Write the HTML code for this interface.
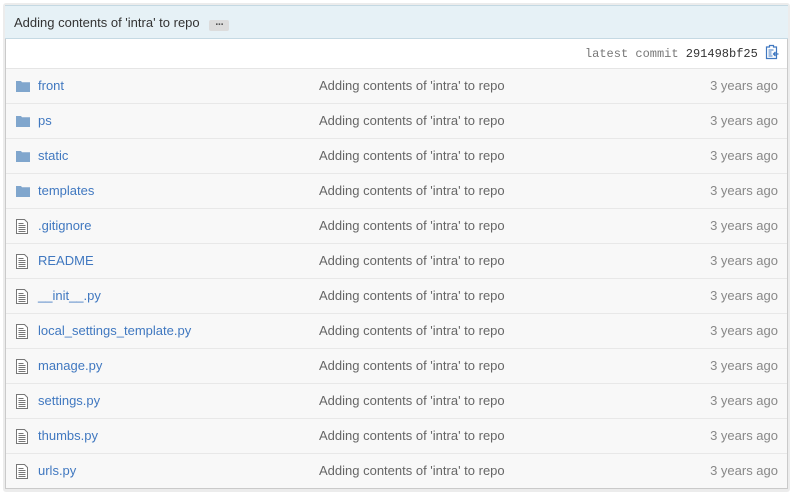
<!DOCTYPE html>
<html><head><meta charset="utf-8"><style>
body{margin:0;width:794px;height:495px;background:#fff;font-family:"Liberation Sans",sans-serif;overflow:hidden}
.outer{position:absolute;left:3px;top:3px;width:787px;height:489px;background:#ececec;border-radius:3px}
.box{position:absolute;left:5px;top:5px;width:783px;height:484px;border:1px solid #cacaca;border-top:none;background:#f8f8f8;box-sizing:border-box}
.hdr{height:34px;background:#e6f1f6;border:1px solid #c5d9e3;border-left:none;border-right:none;box-sizing:border-box;margin:0 -1px;font-size:13px;color:#333;line-height:33px;padding-left:9px}
.dots{display:inline-flex;align-items:center;justify-content:center;background:#dcdcdc;border-radius:2px;width:20px;height:11px;font-size:11px;color:#555;vertical-align:-1px;margin-left:6px;font-weight:bold;letter-spacing:-1px;line-height:11px}
.cb{height:30px;background:#fff;border-bottom:1px solid #e5e5e5;box-sizing:border-box;text-align:right;font-family:"Liberation Mono",monospace;font-size:12px;line-height:30px;padding-right:8px;color:#777}
.cb b{color:#333;font-weight:normal}
.row{height:35px;border-bottom:1px solid #e8e8e8;box-sizing:border-box;position:relative;font-size:13px;line-height:34px}
.row:last-child{border-bottom:none}
.ic{position:absolute;left:10px;top:11px}
.nm{position:absolute;left:32px;color:#4078c0}
.msg{position:absolute;left:313px;color:#666}
.age{position:absolute;right:9px;color:#888}
</style></head><body>
<div class="outer"></div>
<div class="box">
<div class="hdr">Adding contents of 'intra' to repo <span class="dots">···</span></div>
<div class="cb">latest commit <b>291498bf25</b> <svg width="14" height="16" viewBox="0 0 14 16" style="vertical-align:-3px"><path d="M1.5 3h3V1.5h4V3h3v11.5h-10z" fill="none" stroke="#4078c0" stroke-width="1.2"/><path d="M3.5 6h5M3.5 8h3M3.5 10h3M3.5 12h4" stroke="#4078c0" stroke-width="1"/><path d="M13.5 10H8.5M10.5 8l-2 2 2 2" fill="none" stroke="#4078c0" stroke-width="1.3"/></svg></div>
<div id="rows"></div>
</div>
<script>
var f='<svg class="ic" width="14" height="12" viewBox="0 0 14 12"><path d="M0 1h5l1 1.3h8V12H0z" fill="#80a6cd"/></svg>';
var d='<svg class="ic" style="top:10px" width="12" height="15" viewBox="0 0 12 15"><path d="M0.5 0.5h8l3 3v11h-11z" fill="#fff" stroke="#777"/><path d="M2.5 4.5h5M2.5 6.5h7M2.5 8.5h7M2.5 10.5h7M2.5 12.5h7" stroke="#777"/></svg>';
var n=[['front',f],['ps',f],['static',f],['templates',f],['.gitignore',d],['README',d],['__init__.py',d],['local_settings_template.py',d],['manage.py',d],['settings.py',d],['thumbs.py',d],['urls.py',d]];
var h='';n.forEach(function(r){h+='<div class="row">'+r[1]+'<span class="nm">'+r[0]+'</span><span class="msg">Adding contents of \'intra\' to repo</span><span class="age">3 years ago</span></div>';});
document.getElementById('rows').innerHTML=h;
</script>
</body></html>
